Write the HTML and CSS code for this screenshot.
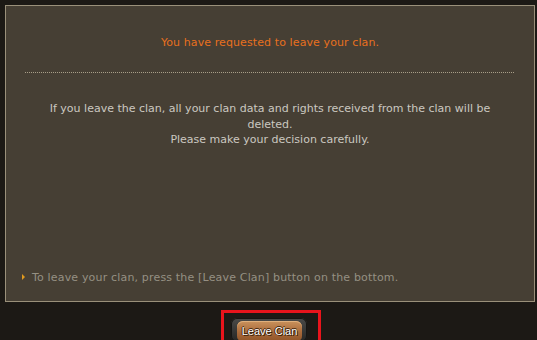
FILE: index.html
```html
<!DOCTYPE html>
<html>
<head>
<meta charset="utf-8">
<link rel="stylesheet" href="styles.css">
</head>
<body>
<div class="panel">
  <p class="title">You have requested to leave your clan.</p>
  <div class="divider"></div>
  <p class="message">If you leave the clan, all your clan data and rights received from the clan will be deleted.<br>Please make your decision carefully.</p>
  <p class="note"><span class="bullet"></span>To leave your clan, press the [Leave Clan] button on the bottom.</p>
</div>
<div class="actions">
  <div class="highlight">
    <div class="btn-frame"><button class="btn">Leave Clan</button></div>
  </div>
</div>
</body>
</html>
```
FILE: styles.css
```css
html, body {
  margin: 0;
  padding: 0;
  background: #1c1915;
  font-family: "DejaVu Sans", Verdana, sans-serif;
  font-size: 11px;
  overflow: hidden;
}
.panel {
  box-sizing: border-box;
  margin: 5px 2px 0 5px;
  width: 530px;
  height: 297px;
  border: 1px solid #9a907a;
  background: #463f34;
  display: flex;
  flex-direction: column;
}
.title {
  margin: 30px 0 0;
  line-height: 14px;
  text-align: center;
  color: #e8701e;
  letter-spacing: 0.1px;
}
.divider {
  margin: 22px 20px 0 19px;
  border-top: 1px dotted #a89e88;
}
.message {
  margin: 28px auto 0;
  width: 470px;
  line-height: 15.5px;
  text-align: center;
  color: #cbc8c0;
}
.note {
  margin: auto 0 16px 16px;
  line-height: 14px;
  color: #959083;
  letter-spacing: 0.17px;
  display: flex;
  align-items: center;
}
.bullet {
  width: 0;
  height: 0;
  border-top: 3px solid transparent;
  border-bottom: 3px solid transparent;
  border-left: 3px solid #e09a1e;
  margin-right: 7px;
  margin-top: -3px;
}
.actions {
  display: flex;
  justify-content: center;
  padding-left: 5px;
  margin-top: 8px;
}
.highlight {
  box-sizing: border-box;
  width: 100px;
  height: 34px;
  border: 3px solid #e8141c;
  padding: 5px 0 0 7px;
}
.btn-frame {
  width: 76px;
  height: 24px;
  border-radius: 6px;
  background: linear-gradient(#4a4a48, #262624);
  box-shadow: inset 0 0 0 1px #151513;
  padding: 3px 0 0 6px;
  box-sizing: border-box;
}
.btn {
  display: block;
  width: 65px;
  height: 21px;
  border: 0;
  border-radius: 6px;
  padding: 0 0 2px;
  background: linear-gradient(#c9925c, #a8693a 55%, #8e5326);
  box-shadow: inset 0 1px 0 #e0b07c;
  color: #ffffff;
  font-family: "Liberation Sans", Arial, sans-serif;
  font-size: 11px;
  text-shadow: 1px 1px 0 #3a1e08, -1px 0 0 #3a1e08, 0 -1px 0 #3a1e08;
  text-align: center;
}
```
